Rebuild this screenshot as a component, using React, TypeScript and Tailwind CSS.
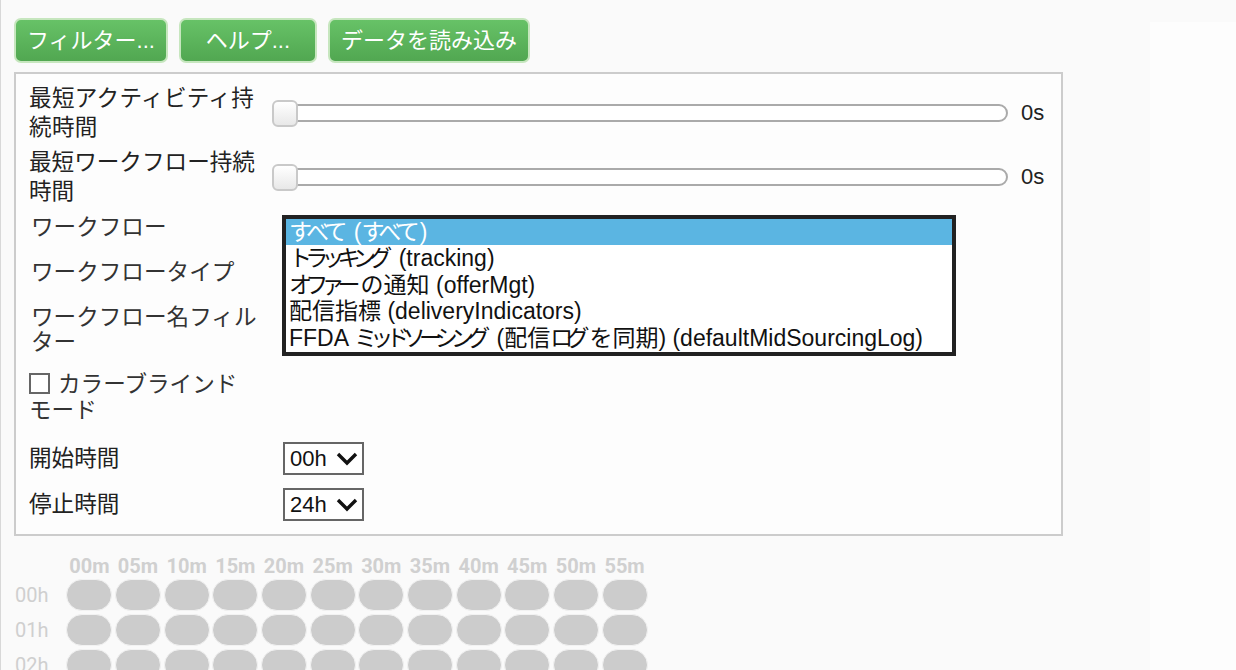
import React from 'react';

const FONT = "font-['Liberation_Sans','Noto_Sans_CJK_JP',sans-serif]";

const minutes = ['00m', '05m', '10m', '15m', '20m', '25m', '30m', '35m', '40m', '45m', '50m', '55m'];
const hours = ['00h', '01h', '02h'];

const workflows = [
  'すべて (すべて)',
  'トラッキング (tracking)',
  'オファーの通知 (offerMgt)',
  '配信指標 (deliveryIndicators)',
  'FFDA ミッドソーシング (配信ログを同期) (defaultMidSourcingLog)',
];

// かなは詰めて表示（リストボックスのフォントがプロポーショナル）
// 最後の一文字には詰めをかけない（後ろのスペースを潰さないため）
function Kana({ text }: { text: string }) {
  const parts = text.split(/([\u3040-\u309f]+|[\u30a0-\u30ff]+)/);
  return (
    <>
      {parts.map((p, i) => {
        const kata = /[\u30a0-\u30ff]/.test(p);
        const hira = /[\u3040-\u309f]/.test(p);
        if (!kata && !hira) return <span key={i}>{p}</span>;
        return (
          <span key={i}>
            <span className={kata ? 'tracking-[-6.8px]' : 'tracking-[-4.5px]'}>{p.slice(0, -1)}</span>
            {p.slice(-1)}
          </span>
        );
      })}
    </>
  );
}

function GreenButton({ children, className = '' }: { children: React.ReactNode; className?: string }) {
  return (
    <button className={`h-[45px] flex items-center justify-center rounded-[7px] border-2 border-[#c6e6be] bg-linear-to-b from-[#67c267] to-[#51a751] text-white text-[22px] leading-none whitespace-nowrap ${className}`}>
      {children}
    </button>
  );
}

function Slider() {
  return (
    <div className="relative w-[736px] h-[18px] rounded-full border-2 border-[#aaa] bg-white">
      {/* つまみ */}
      <div className="absolute -top-[6px] -left-[2px] w-[26px] h-[27px] rounded-[6px] border-2 border-[#c9c9c9] bg-linear-to-b from-white to-[#e8e8e8]" />
    </div>
  );
}

function Chevron() {
  return (
    <svg width="22" height="14" viewBox="0 0 22 14" className="shrink-0">
      <polyline points="2,2 11,11 20,2" fill="none" stroke="#111" strokeWidth="3.4" />
    </svg>
  );
}

function HourSelect({ value }: { value: string }) {
  return (
    <div className="w-[81px] h-[33px] border-2 border-[#666] bg-white flex items-center pl-[5px] pr-[4px] justify-between">
      <span className="text-[22px] leading-none text-[#111]">{value}</span>
      <Chevron />
    </div>
  );
}

export default function App() {
  return (
    <div className={`min-h-screen flex bg-[#fafafa] text-[#222] ${FONT}`}>
      <div className="w-[1150px] border-l border-[#d8d8d8] pl-[13px] pt-[18px]">
        {/* 上部ボタン */}
        <div className="flex gap-[11px]">
          <GreenButton className="px-[11px]">フィルター...</GreenButton>
          <GreenButton className="min-w-[138px] px-[11px]">ヘルプ...</GreenButton>
          <GreenButton className="px-[11px]">データを読み込み</GreenButton>
        </div>

        {/* フィルターパネル */}
        <div className="mt-[9px] w-[1049px] border-2 border-[#ccc] bg-[#fdfdfd] pl-[13px] pt-[10px] pb-[13px] text-[22.6px]">
          <div className="flex items-center h-[58px]">
            <div className="w-[243px] leading-[29px] whitespace-nowrap tracking-[0.3px]">
              最短アクティビティ持<br />続時間
            </div>
            <Slider />
            <span className="ml-[13px] text-[22px] leading-none text-[#222]">0s</span>
          </div>
          <div className="mt-[6px] flex items-center h-[58px]">
            <div className="w-[243px] leading-[29px] whitespace-nowrap">
              最短ワークフロー持続<br />時間
            </div>
            <Slider />
            <span className="ml-[13px] text-[22px] leading-none text-[#222]">0s</span>
          </div>

          <div className="mt-[9px] flex">
            <div className="w-[253px] pl-[2px] leading-[25px] text-[#333]">
              <div className="h-[45px]">ワークフロー</div>
              <div className="h-[45px]">ワークフロータイプ</div>
              <div className="whitespace-nowrap">
                ワークフロー名フィル<br />ター
              </div>
            </div>
            {/* ワークフロー一覧 */}
            <div className="w-[674px] h-[141px] border-4 border-[#222] bg-white text-[23px]">
              {workflows.map((w, i) => (
                <div
                  key={w}
                  className={`h-[26.4px] leading-[26px] pl-[3px] whitespace-nowrap ${i === 0 ? 'bg-[#5bb5e2] text-white' : 'text-[#111]'}`}
                >
                  <Kana text={w} />
                </div>
              ))}
            </div>
          </div>

          <div className="mt-[16px] flex items-start">
            <div className="mt-[1px] w-[21px] h-[21px] border-2 border-[#666] bg-white shrink-0" />
            <div className="ml-[8px] leading-[26px] whitespace-nowrap text-[#333]">
              カラーブラインド<br />
              <span className="-ml-[29px]">モード</span>
            </div>
          </div>

          <div className="mt-[18px] flex items-center h-[33px]">
            <div className="w-[254px]">開始時間</div>
            <HourSelect value="00h" />
          </div>
          <div className="mt-[13px] flex items-center h-[33px]">
            <div className="w-[254px]">停止時間</div>
            <HourSelect value="24h" />
          </div>
        </div>

        {/* ヒートマップ */}
        <div className="mt-[18px] font-['Roboto',sans-serif]">
          <div className="grid grid-cols-[51px_repeat(12,48.67px)] h-[24px] items-center">
            <div />
            {minutes.map((m) => (
              <div key={m} className="text-center text-[20px] font-bold text-[#d0d0d0] leading-none">
                {m}
              </div>
            ))}
          </div>
          <div className="mt-[1px] flex flex-col gap-[3px]">
            {hours.map((h) => (
              <div key={h} className="grid grid-cols-[51px_repeat(12,48.67px)] h-[32px] items-center">
                <div className="pl-[1px] text-[20px] text-[#cfcfcf] leading-none">{h}</div>
                {minutes.map((m) => (
                  <div key={m} className="flex justify-center">
                    <div className="w-[46px] h-[32px] rounded-[16px] bg-[#cccccc] border border-[#f2f2f2]" />
                  </div>
                ))}
              </div>
            ))}
          </div>
        </div>
      </div>
      <div className="flex-1 mt-[22px] bg-[#fdfdfd]" />
    </div>
  );
}
